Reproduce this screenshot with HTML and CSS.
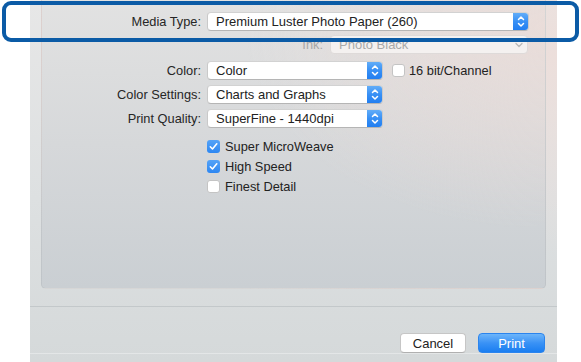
FILE: index.html
```html
<!DOCTYPE html>
<html>
<head>
<meta charset="utf-8">
<link rel="stylesheet" href="styles.css">
</head>
<body>
<div class="window">
  <div class="group">
    <div class="grid media">
      <div class="label">Media Type:</div>
      <div class="popup wide"><span class="val">Premium Luster Photo Paper (260)</span>
        <span class="stepper"><svg width="16" height="19" viewBox="0 0 16 19"><path d="M5.5 7.5 L8 5 L10.5 7.5 M5.5 11.5 L8 14 L10.5 11.5" fill="none" stroke="#fff" stroke-width="1.5" stroke-linecap="round" stroke-linejoin="round"/></svg></span>
      </div>
    </div>
    <div class="ink-row">
      <div class="label dim">Ink:</div>
      <div class="popup ink"><span class="val">Photo Black</span>
        <svg class="chev" width="10" height="8" viewBox="0 0 10 8"><path d="M2 2.5 L5 5.5 L8 2.5" fill="none" stroke="#b9b9b9" stroke-width="1.3" stroke-linecap="round" stroke-linejoin="round"/></svg>
      </div>
    </div>
    <div class="grid form">
      <div class="label">Color:</div>
      <div class="ctrl">
        <div class="popup narrow"><span class="val">Color</span>
          <span class="stepper"><svg width="16" height="19" viewBox="0 0 16 19"><path d="M5.5 7.5 L8 5 L10.5 7.5 M5.5 11.5 L8 14 L10.5 11.5" fill="none" stroke="#fff" stroke-width="1.5" stroke-linecap="round" stroke-linejoin="round"/></svg></span>
        </div>
        <label class="check bit"><span class="box"></span>16 bit/Channel</label>
      </div>
      <div class="label">Color Settings:</div>
      <div class="ctrl">
        <div class="popup narrow"><span class="val">Charts and Graphs</span>
          <span class="stepper"><svg width="16" height="19" viewBox="0 0 16 19"><path d="M5.5 7.5 L8 5 L10.5 7.5 M5.5 11.5 L8 14 L10.5 11.5" fill="none" stroke="#fff" stroke-width="1.5" stroke-linecap="round" stroke-linejoin="round"/></svg></span>
        </div>
      </div>
      <div class="label">Print Quality:</div>
      <div class="ctrl">
        <div class="popup narrow"><span class="val">SuperFine - 1440dpi</span>
          <span class="stepper"><svg width="16" height="19" viewBox="0 0 16 19"><path d="M5.5 7.5 L8 5 L10.5 7.5 M5.5 11.5 L8 14 L10.5 11.5" fill="none" stroke="#fff" stroke-width="1.5" stroke-linecap="round" stroke-linejoin="round"/></svg></span>
        </div>
      </div>
    </div>
    <div class="checks">
      <label class="check"><span class="box on"><svg width="13" height="13" viewBox="0 0 13 13"><path d="M3.3 6.8 L5.5 9 L9.8 3.8" fill="none" stroke="#fff" stroke-width="1.6" stroke-linecap="round" stroke-linejoin="round"/></svg></span>Super MicroWeave</label>
      <label class="check"><span class="box on"><svg width="13" height="13" viewBox="0 0 13 13"><path d="M3.3 6.8 L5.5 9 L9.8 3.8" fill="none" stroke="#fff" stroke-width="1.6" stroke-linecap="round" stroke-linejoin="round"/></svg></span>High Speed</label>
      <label class="check"><span class="box"></span>Finest Detail</label>
    </div>
  </div>
  <div class="footer">
    <div class="buttons">
      <div class="btn cancel">Cancel</div>
      <div class="btn print">Print</div>
    </div>
  </div>
</div>
<div class="highlight"></div>
</body>
</html>
```
FILE: styles.css
```css
html, body {
  margin: 0;
  padding: 0;
  background: #ffffff;
}
body {
  width: 581px;
  height: 362px;
  overflow: hidden;
  position: relative;
  font-family: "Liberation Sans", Arial, sans-serif;
  font-size: 12.8px;
  color: #222222;
}
.window {
  margin-left: 30px;
  width: 527px;
  height: 362px;
  background:
    radial-gradient(ellipse 320px 200px at 100% 15%, rgba(237, 222, 218, 0.9), rgba(237, 222, 218, 0) 100%),
    linear-gradient(to bottom, #e7e7e7 0%, #dde0e1 55%, #d5d9da 100%);
}
.group {
  margin-left: 11px;
  width: 505px;
  height: 289px;
  box-sizing: border-box;
  border: 1px solid rgba(0, 0, 0, 0.05);
  border-top: none;
  border-radius: 0 0 5px 5px;
  padding-top: 12px;
  background:
    radial-gradient(ellipse 300px 200px at 100% 10%, rgba(235, 220, 216, 0.85), rgba(235, 220, 216, 0) 100%),
    linear-gradient(to bottom, #e2e2e2 0%, #d6d8da 50%, #cacfd3 100%);
}
.grid {
  display: grid;
  grid-template-columns: 159px auto;
  column-gap: 6px;
  align-items: center;
}
.form {
  margin-top: 6px;
  row-gap: 5px;
}
.label {
  text-align: right;
  white-space: nowrap;
  line-height: 19px;
  color: #262626;
}
.label.dim {
  color: #a7a7a7;
}
.ctrl {
  display: flex;
  align-items: center;
}
.popup {
  position: relative;
  height: 19px;
  box-sizing: border-box;
  background: #ffffff;
  border: 1px solid #c9c9c9;
  border-top-color: #d2d2d2;
  border-bottom-color: #b5b5b5;
  border-radius: 4px;
  display: flex;
  align-items: center;
  justify-content: space-between;
  overflow: hidden;
}
.popup .val {
  padding-left: 8px;
  white-space: nowrap;
  font-size: 13px;
  color: #222222;
}
.popup.wide {
  width: 322px;
}
.popup.narrow {
  width: 176px;
}
.stepper {
  width: 16px;
  height: 19px;
  margin: -1px -1px -1px 0;
  border-radius: 0 4px 4px 0;
  background: linear-gradient(to bottom, #67b0f8 0%, #3890f5 50%, #1f7cf0 100%);
  display: flex;
}
.ink-row {
  display: flex;
  justify-content: flex-end;
  align-items: center;
  gap: 7px;
  margin-top: 4px;
  padding-right: 17px;
}
.popup.ink {
  width: 198px;
  background: #f4f1f0;
  border-color: #dedad9;
}
.popup.ink .val {
  color: #a9a9a9;
}
.chev {
  margin-right: 3px;
}
.check {
  display: flex;
  align-items: center;
  gap: 5px;
  height: 20px;
  white-space: nowrap;
  color: #222222;
}
.check .box {
  width: 13px;
  height: 13px;
  box-sizing: border-box;
  border-radius: 3px;
  background: #ffffff;
  border: 1px solid #c4c4c4;
  display: flex;
}
.check .box.on {
  border: none;
  background: linear-gradient(to bottom, #55a3f7, #2d87f2);
}
.check.bit {
  margin-left: 9px;
  gap: 4px;
}
.checks {
  margin-top: 8px;
  margin-left: 165px;
  display: flex;
  flex-direction: column;
}
.footer {
  margin-top: 17px;
  border-top: 1px solid #c3c8ca;
  box-shadow: 0 1px 0 rgba(255, 255, 255, 0.35);
}
.buttons {
  display: flex;
  justify-content: flex-end;
  gap: 12px;
  padding-top: 26px;
  padding-right: 12px;
}
.btn {
  height: 20px;
  box-sizing: border-box;
  border-radius: 4px;
  display: flex;
  align-items: center;
  justify-content: center;
  font-size: 13px;
}
.cancel {
  width: 66px;
  background: #ffffff;
  border: 1px solid #c6c6c6;
  border-bottom-color: #b0b0b0;
  color: #222222;
}
.print {
  width: 67px;
  background: linear-gradient(to bottom, #6db5fa 0%, #3a92f5 50%, #1a7ef1 100%);
  border: 1px solid #2a84ee;
  color: #ffffff;
}
.highlight {
  position: absolute;
  left: 2px;
  top: 1px;
  width: 577px;
  height: 41px;
  box-sizing: border-box;
  border: 4px solid #0b5ba6;
  border-radius: 9px;
}
```
